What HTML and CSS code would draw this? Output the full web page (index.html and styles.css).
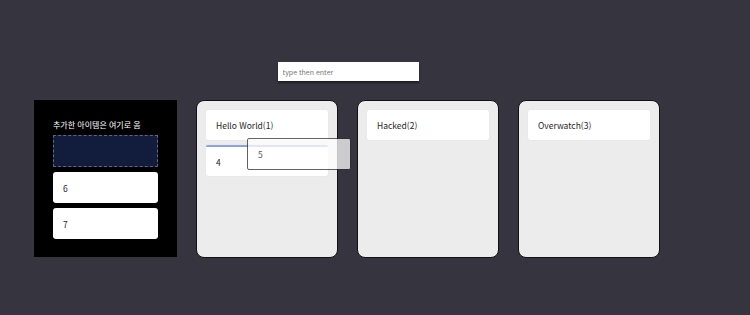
FILE: index.html
```html
<!DOCTYPE html>
<html lang="ko">
<head>
  <meta charset="UTF-8" />
  <meta name="viewport" content="width=device-width, initial-scale=1.0"/>
  <title>Kanban</title>
  <link rel="stylesheet" href="styles.css">
</head>
<body>
  <div class="board">
    <div class="adder">
      <input type="text" placeholder="type then enter">
    </div>

    <div class="lanes">
      <div class="inbox">
        <div class="inbox-title">추가한 아이템은 여기로 옴</div>
        <div class="drop-slot"></div>
        <div class="item">6</div>
        <div class="item">7</div>
      </div>

      <div class="lane">
        <div class="lane-head">Hello World(1)</div>
        <div class="card drop-target">4</div>
      </div>
      <div class="lane">
        <div class="lane-head">Hacked(2)</div>
      </div>
      <div class="lane">
        <div class="lane-head">Overwatch(3)</div>
      </div>
    </div>
  </div>

  <div class="ghost">5</div>
</body>
</html>
```

FILE: styles.css
```css
body { margin: 0; background: #36343f; font-family: "Noto Sans CJK KR", "Noto Sans", sans-serif; color: #1e1e1e; }
.board { width: 628px; margin-left: 34px; padding-top: 62px; }
.adder { display: flex; justify-content: center; }
.adder input { width: 141px; height: 19px; box-sizing: border-box; border: none; padding: 0 5px; font-size: 7px; font-family: inherit; box-shadow: 0 2px 2px rgba(0,0,0,.45); outline: none; }
.adder input::placeholder { color: #777; }
.lanes { display: flex; gap: 19px; margin-top: 19px; }

.inbox { width: 143px; height: 157px; box-sizing: border-box; background: #000; padding: 19px 19px 0; }
.inbox-title { color: #fff; font-size: 8px; line-height: 12px; margin-bottom: 4px; }
.drop-slot { height: 32px; box-sizing: border-box; background: #121c3c; border: 1px dashed #5e6684; }
.item { height: 31px; margin-top: 5px; padding-left: 10px; background: #fff; border-radius: 3px; display: flex; align-items: center; font-size: 8.5px; }

.lane { width: 142px; height: 158px; box-sizing: border-box; background: #ececec; border: 1px solid #111; border-radius: 8px; padding: 9px 9px 0; }
.lane-head, .card { height: 30px; padding-left: 10px; background: #fff; border-radius: 2px; display: flex; align-items: center; font-size: 8.5px; box-shadow: 0 0 1px rgba(0,0,0,.12); }
.card { margin-top: 5px; height: 31px; box-sizing: border-box; }
.drop-target { border-top: 2px solid #8da2d8; }

.ghost { position: absolute; left: 247px; top: 138px; width: 104px; height: 32px; box-sizing: border-box; padding-left: 10px; display: flex; align-items: center; background: #fff; border: 1px solid #2e2e2e; border-radius: 2px; opacity: .75; font-size: 8.5px; }
```
